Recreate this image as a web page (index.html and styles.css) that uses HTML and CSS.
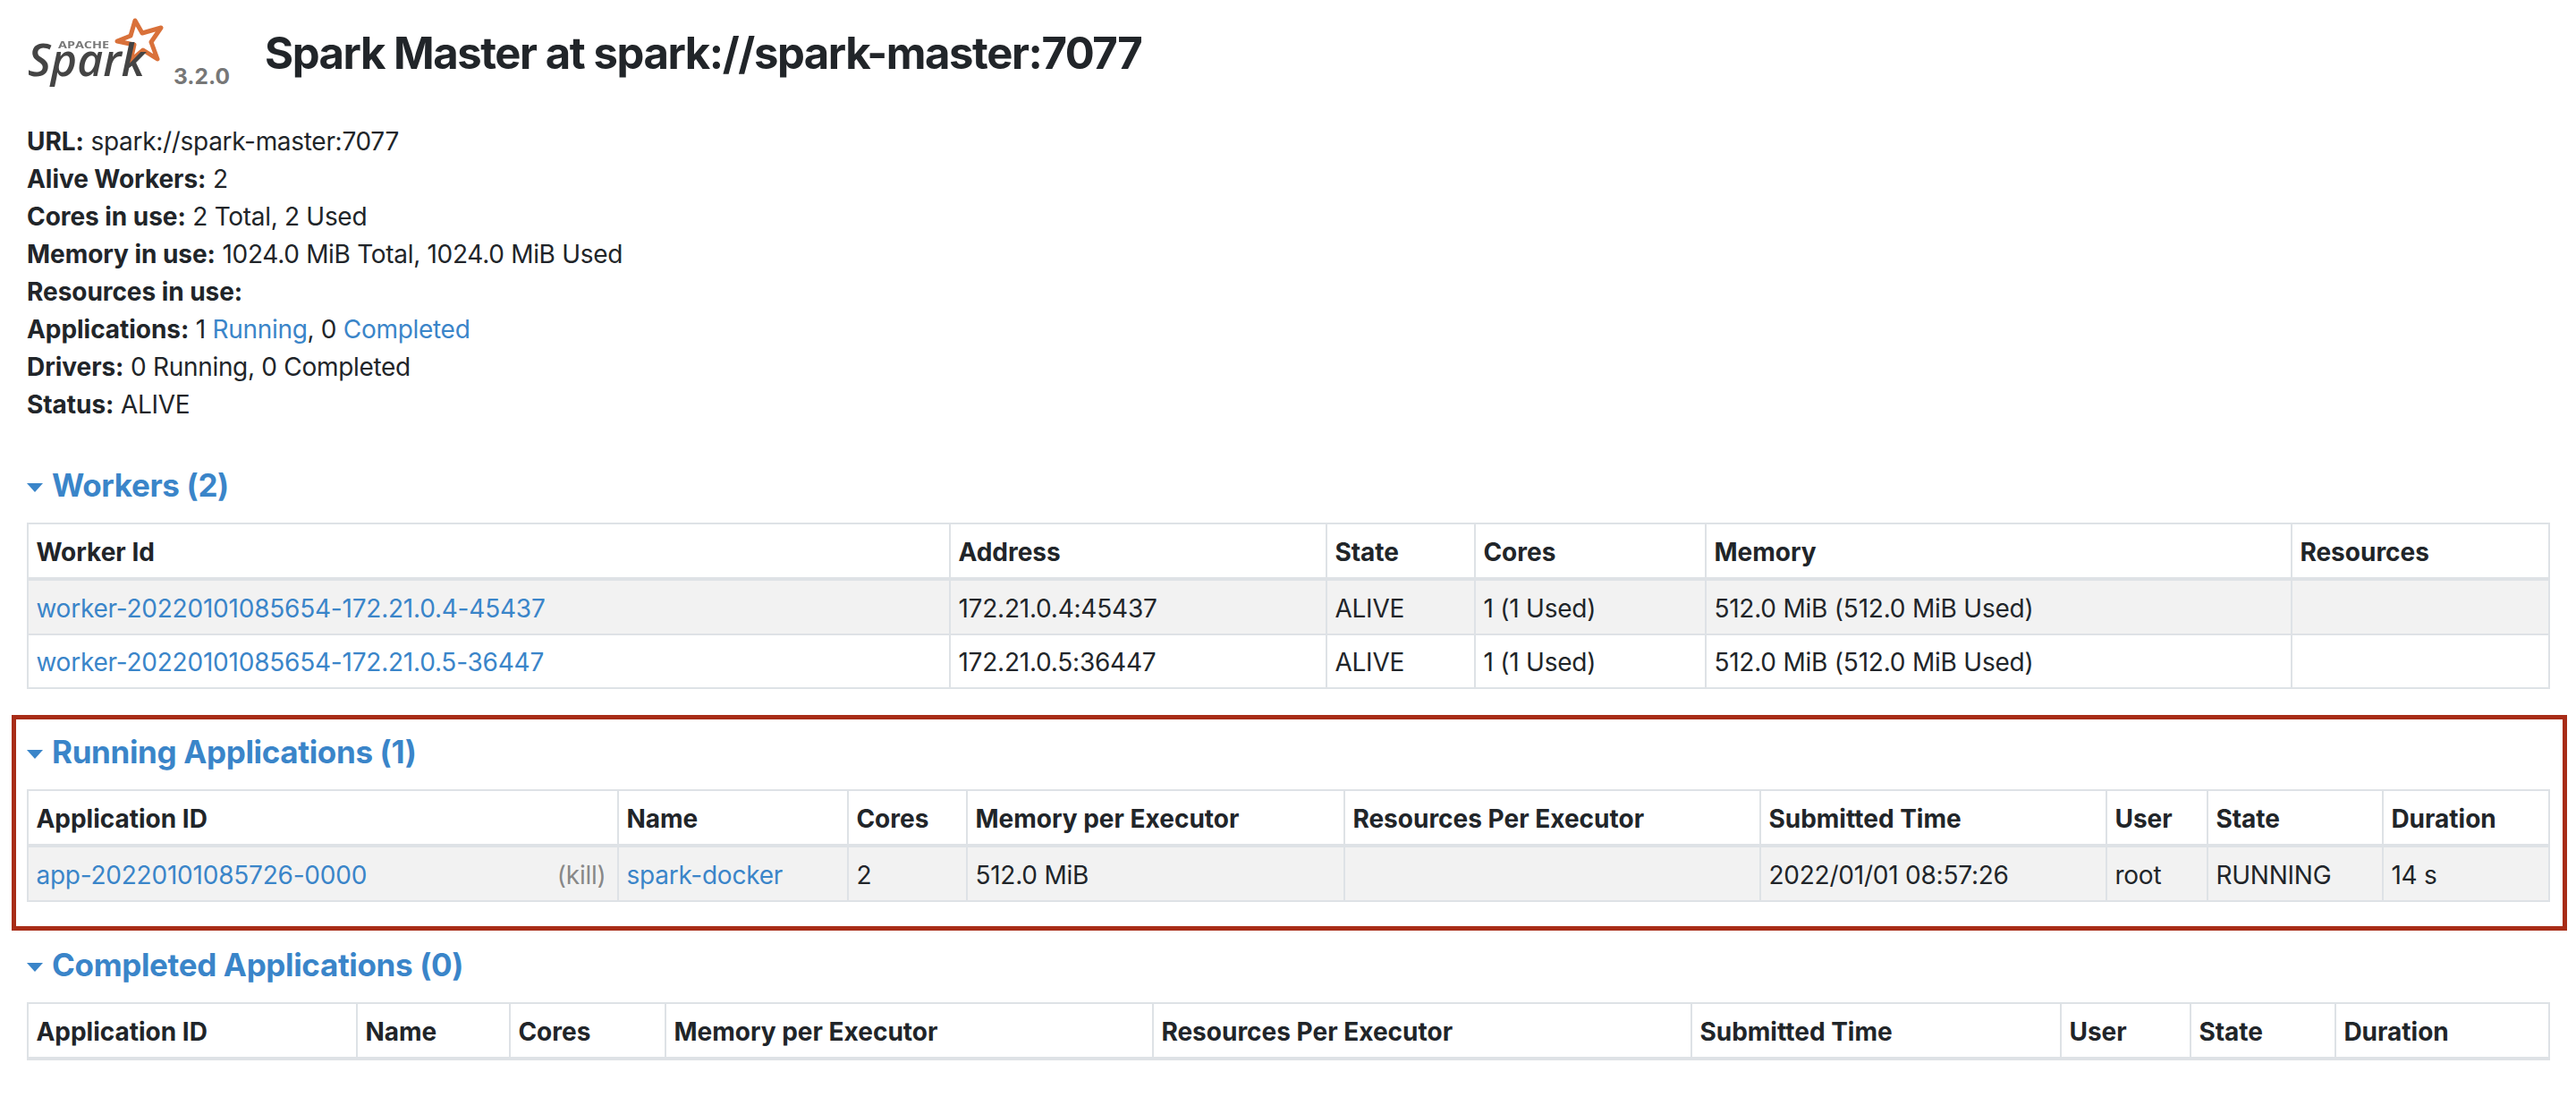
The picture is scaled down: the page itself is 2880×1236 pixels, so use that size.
FILE: index.html
```html
<!DOCTYPE html>
<html lang="en">
<head>
<meta charset="utf-8">
<title>Spark Master at spark://spark-master:7077</title>
<link rel="stylesheet" href="styles.css">
</head>
<body>
<div class="page">
  <header class="page-head">
    <a class="brand" href="#">
      <svg class="logo" viewBox="0 0 164 90" width="164" height="90" aria-label="Apache Spark logo">
        <path class="logo-star" d="M121 5 L129 19 L150 13 L139 29 L146 48 L130 38 L116 50 L120 32 L101 28 L116 22 Z"/>
        <text class="logo-apache" x="35" y="36" textLength="57" lengthAdjust="spacingAndGlyphs">APACHE</text>
        <text class="logo-word" x="1" y="67" textLength="131" lengthAdjust="spacingAndGlyphs">Spark</text>
      </svg>
      <span class="version">3.2.0</span>
    </a>
    <h3 class="title">Spark Master at spark://spark-master:7077</h3>
  </header>

  <ul class="summary">
    <li><strong>URL:</strong> spark://spark-master:7077</li>
    <li><strong>Alive Workers:</strong> 2</li>
    <li><strong>Cores in use:</strong> 2 Total, 2 Used</li>
    <li><strong>Memory in use:</strong> 1024.0 MiB Total, 1024.0 MiB Used</li>
    <li><strong>Resources in use:</strong></li>
    <li><strong>Applications:</strong> 1 <a href="#running">Running</a>, 0 <a href="#completed">Completed</a></li>
    <li><strong>Drivers:</strong> 0 Running, 0 Completed</li>
    <li><strong>Status:</strong> ALIVE</li>
  </ul>

  <section class="block">
    <h4 class="block-title"><a href="#workers">Workers (2)</a></h4>
    <table class="grid">
      <colgroup><col class="w1"><col class="w2"><col class="w3"><col class="w4"><col class="w5"><col class="w6"></colgroup>
      <thead><tr><th>Worker Id</th><th>Address</th><th>State</th><th>Cores</th><th>Memory</th><th>Resources</th></tr></thead>
      <tbody>
        <tr><td><a href="#w1">worker-20220101085654-172.21.0.4-45437</a></td><td>172.21.0.4:45437</td><td>ALIVE</td><td>1 (1 Used)</td><td>512.0 MiB (512.0 MiB Used)</td><td></td></tr>
        <tr><td><a href="#w2">worker-20220101085654-172.21.0.5-36447</a></td><td>172.21.0.5:36447</td><td>ALIVE</td><td>1 (1 Used)</td><td>512.0 MiB (512.0 MiB Used)</td><td></td></tr>
      </tbody>
    </table>
  </section>

  <section class="block" id="running">
    <h4 class="block-title"><a href="#running">Running Applications (1)</a></h4>
    <table class="grid">
      <colgroup><col class="r1"><col class="r2"><col class="r3"><col class="r4"><col class="r5"><col class="r6"><col class="r7"><col class="r8"><col class="r9"></colgroup>
      <thead><tr><th>Application ID</th><th>Name</th><th>Cores</th><th>Memory per Executor</th><th>Resources Per Executor</th><th>Submitted Time</th><th>User</th><th>State</th><th>Duration</th></tr></thead>
      <tbody>
        <tr><td><a href="#app">app-20220101085726-0000</a><a class="kill" href="#kill">(kill)</a></td><td><a href="#name">spark-docker</a></td><td>2</td><td>512.0 MiB</td><td></td><td>2022/01/01 08:57:26</td><td>root</td><td>RUNNING</td><td>14 s</td></tr>
      </tbody>
    </table>
  </section>

  <section class="block" id="completed">
    <h4 class="block-title"><a href="#completed">Completed Applications (0)</a></h4>
    <table class="grid">
      <colgroup><col class="c1"><col class="c2"><col class="c3"><col class="c4"><col class="c5"><col class="c6"><col class="c7"><col class="c8"><col class="c9"></colgroup>
      <thead><tr><th>Application ID</th><th>Name</th><th>Cores</th><th>Memory per Executor</th><th>Resources Per Executor</th><th>Submitted Time</th><th>User</th><th>State</th><th>Duration</th></tr></thead>
      <tbody></tbody>
    </table>
  </section>

  <div class="highlight" aria-hidden="true"></div>
</div>
</body>
</html>
```
FILE: styles.css
```css
* { box-sizing: border-box; }
html, body { margin: 0; padding: 0; background: #fff; }
body {
  font-family: Inter, "Liberation Sans", sans-serif;
  font-size: 28px;
  line-height: 42px;
  color: #212529;
}
a { color: #3a85c9; text-decoration: none; }

.page { position: relative; padding: 0 30px; height: 1236px; overflow: hidden; }

.page-head { display: flex; align-items: flex-start; height: 137px; }
.brand { display: flex; align-items: flex-start; width: 266px; flex: none; padding-top: 18px; }
.logo { display: block; flex: none; filter: blur(.6px); }
.logo-star { fill: none; stroke: #d9713a; stroke-width: 5; stroke-linejoin: round; }
.logo-apache { font-family: "Open Sans", sans-serif; font-weight: 700; font-size: 10px; fill: #777; }
.logo-word { font-family: "Open Sans", sans-serif; font-weight: 600; font-style: italic; font-size: 50px; fill: #444; }
.version { font-weight: 700; font-size: 24.5px; line-height: 30px; color: #777; margin-top: 52px; }
.title { margin: 0; padding-top: 30px; font-size: 49px; line-height: 60px; font-weight: 700; letter-spacing: -1.43px; }

.summary { list-style: none; margin: 0; padding: 0; letter-spacing: -.3px; }
.summary strong { font-weight: 700; letter-spacing: -.05px; }

.block { margin-top: 48px; }
.block + .block { margin-top: 49px; }
.block-title { margin: 0 0 21px; font-size: 35px; line-height: 42px; font-weight: 700; display: flex; align-items: center; letter-spacing: -.35px; }
.block-title::before {
  content: "";
  flex: none;
  width: 0;
  height: 0;
  margin-right: 10px;
  margin-top: 6px;
  border-left: 9.5px solid transparent;
  border-right: 9.5px solid transparent;
  border-top: 10px solid #3a85c9;
}

.grid { width: 2819px; table-layout: fixed; border-collapse: collapse; }
.grid th, .grid td { border: 2px solid #dee2e6; padding: 9.9px 8.4px 6.9px; text-align: left; vertical-align: top; white-space: nowrap; }
.grid th { font-weight: 700; border-bottom-width: 4px; }
.grid td { letter-spacing: -.22px; }
.grid tbody tr:nth-child(odd) { background: #f2f2f2; }
.kill { float: right; color: #888; margin-right: 4px; }

.w1 { width: 1031px; } .w2 { width: 421px; } .w3 { width: 166px; } .w4 { width: 258px; } .w5 { width: 655px; } .w6 { width: 288px; }
.r1 { width: 660px; } .r2 { width: 257px; } .r3 { width: 133px; } .r4 { width: 422px; } .r5 { width: 465px; } .r6 { width: 387px; } .r7 { width: 113px; } .r8 { width: 196px; } .r9 { width: 186px; }
.c1 { width: 368px; } .c2 { width: 171px; } .c3 { width: 174px; } .c4 { width: 545px; } .c5 { width: 602px; } .c6 { width: 413px; } .c7 { width: 145px; } .c8 { width: 162px; } .c9 { width: 239px; }

.highlight { position: absolute; left: 13px; top: 799px; width: 2857px; height: 241px; border: 5px solid #a82c17; pointer-events: none; }
```
